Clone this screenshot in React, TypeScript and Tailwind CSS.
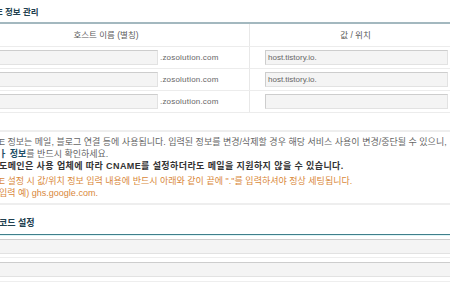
const font = "font-['Liberation_Sans','Noto_Sans_CJK_KR',sans-serif]";

type InputProps = {
  value?: string;
  className?: string;
};

function FakeInput({ value = "", className = "" }: InputProps) {
  return (
    <div
      className={`flex h-[15px] items-center border border-[#cdcdcd] border-b-[#e2e2e2] border-r-[#e2e2e2] bg-[#f4f4f4] px-[2px] text-[8px] text-[#666] ${className}`}
    >
      {value}
    </div>
  );
}

const rows = [
  { host: "", value: "host.tistory.io." },
  { host: "www", value: "host.tistory.io." },
  { host: "", value: "" },
];

export default function App() {
  return (
    <div className={`h-[300px] w-[450px] overflow-hidden bg-white ${font}`}>
      <div className="-ml-[37px] w-[498px]">
        <div className="flex h-[22px] items-center pl-[34px] pt-[2px] text-[8.5px] font-bold text-[#21404f]">
          E 정보 관리
        </div>

        <div className="border-t-2 border-[#a3b8bf]">
          <div className="grid h-[23px] grid-cols-[286px_212px] border-b border-[#ececec] text-[8.5px] text-[#5a5a5a]">
            <div className="flex items-center justify-center pt-[1px]">호스트 이름 (별칭)</div>
            <div className="flex items-center justify-center border-l border-[#e8e8e8] pt-[1px]">값 / 위치</div>
          </div>
          {rows.map((row, i) => (
            <div key={i} className="grid h-[22px] grid-cols-[286px_212px] border-b border-[#ececec]">
              <div className="flex items-center gap-[2px] pl-[15px]">
                <FakeInput value={row.host} className="w-[180px]" />
                <span className="text-[8px] tracking-[0.2px] text-[#666]">.zosolution.com</span>
              </div>
              <div className="flex items-center border-l border-[#e8e8e8] pl-[15px] pr-[13px]">
                <FakeInput value={row.value} className="w-full" />
              </div>
            </div>
          ))}
        </div>

        <div className="mt-[17px] border-y-2 border-[#eeeeee] pb-[4px] pl-[36px] pt-[4px] text-[9px] leading-[12px]">
          <p className="whitespace-nowrap text-[#666]">
            E 정보는 메일, 블로그 연결 등에 사용됩니다. 입력된 정보를 변경/삭제할 경우 해당 서비스 사용이 변경/중단될 수 있으니,
          </p>
          <p className="text-[#666]">
            <span className="font-bold text-[#1f5068]">ㅏ 정보</span>를 반드시 확인하세요.
          </p>
          <p className="whitespace-nowrap font-bold tracking-[0.4px] text-[#333]">
            도메인은 사용 업체에 따라 CNAME를 설정하더라도 메일을 지원하지 않을 수 있습니다.
          </p>
          <p className="mt-[3px] whitespace-nowrap text-[#d9883a]">
            E 설정 시 값/위치 정보 입력 내용에 반드시 아래와 같이 끝에 ".''를 입력하셔야 정상 세팅됩니다.
          </p>
          <p className="text-[#d9883a]">입력 예) ghs.google.com.</p>
        </div>

        <div className="flex h-[29px] items-end pb-[4px] pl-[36px] text-[9px] font-bold text-[#21404f]">
          코드 설정
        </div>
        <div className="h-[1px] bg-[#3f7f8b]" />
        <div className="h-[1px] bg-[#dff4f6]" />
        <div className="border-b border-[#eeeeee] pb-[3px] pt-[3px]">
          <FakeInput className="w-full" />
        </div>
        <div className="border-b border-[#eeeeee] pb-[4px] pt-[4px]">
          <FakeInput className="w-full" />
        </div>
      </div>
    </div>
  );
}
